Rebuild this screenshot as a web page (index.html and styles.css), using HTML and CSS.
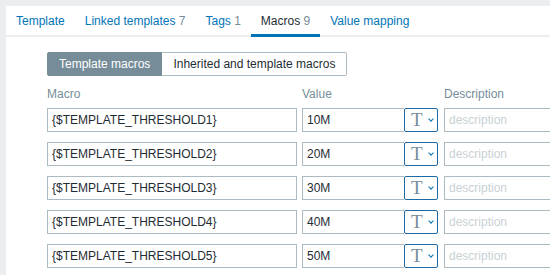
FILE: index.html
```html
<!DOCTYPE html>
<html lang="en">
<head>
    <meta charset="UTF-8">
    <meta name="viewport" content="width=device-width, initial-scale=1.0">
    <title>Template macros</title>
    <link rel="stylesheet" href="styles.css">
</head>
<body>
    <div class="panel">
        <ul class="tabs">
            <li><a href="#">Template</a></li>
            <li><a href="#">Linked templates <span class="count">7</span></a></li>
            <li><a href="#">Tags <span class="count">1</span></a></li>
            <li class="active"><a href="#">Macros <span class="count">9</span></a></li>
            <li><a href="#">Value mapping</a></li>
        </ul>

        <div class="content">
            <div class="segmented">
                <button class="seg on">Template macros</button>
                <button class="seg">Inherited and template macros</button>
            </div>

            <div class="macro-table">
                <div class="head">
                    <span class="col-macro">Macro</span>
                    <span class="col-value">Value</span>
                    <span class="col-desc">Description</span>
                </div>

                <div class="row">
                    <input class="col-macro" type="text" value="{$TEMPLATE_THRESHOLD1}">
                    <div class="col-value value-group">
                        <input type="text" value="10M">
                        <button class="type-btn"><span class="t">T</span><span class="chev"></span></button>
                    </div>
                    <input class="col-desc" type="text" placeholder="description">
                </div>
                <div class="row">
                    <input class="col-macro" type="text" value="{$TEMPLATE_THRESHOLD2}">
                    <div class="col-value value-group">
                        <input type="text" value="20M">
                        <button class="type-btn"><span class="t">T</span><span class="chev"></span></button>
                    </div>
                    <input class="col-desc" type="text" placeholder="description">
                </div>
                <div class="row">
                    <input class="col-macro" type="text" value="{$TEMPLATE_THRESHOLD3}">
                    <div class="col-value value-group">
                        <input type="text" value="30M">
                        <button class="type-btn"><span class="t">T</span><span class="chev"></span></button>
                    </div>
                    <input class="col-desc" type="text" placeholder="description">
                </div>
                <div class="row">
                    <input class="col-macro" type="text" value="{$TEMPLATE_THRESHOLD4}">
                    <div class="col-value value-group">
                        <input type="text" value="40M">
                        <button class="type-btn"><span class="t">T</span><span class="chev"></span></button>
                    </div>
                    <input class="col-desc" type="text" placeholder="description">
                </div>
                <div class="row">
                    <input class="col-macro" type="text" value="{$TEMPLATE_THRESHOLD5}">
                    <div class="col-value value-group">
                        <input type="text" value="50M">
                        <button class="type-btn"><span class="t">T</span><span class="chev"></span></button>
                    </div>
                    <input class="col-desc" type="text" placeholder="description">
                </div>
            </div>
        </div>
    </div>
</body>
</html>
```

FILE: styles.css
```css
html,
body {
    height: 100%;
}
body {
    box-sizing: border-box;
    margin: 0;
    padding: 6px 0 0 6px;
    background-color: #ebeef0;
    font-family: "Liberation Sans", Arial, sans-serif;
    font-size: 12px;
    color: #1f2c33;
    overflow: hidden;
}
.panel {
    background-color: #fff;
    height: 100%;
    overflow: hidden;
}
.tabs {
    display: flex;
    list-style: none;
    margin: 0;
    padding: 0;
    border-bottom: 2px solid #ebeef0;
}
.tabs li {
    margin-bottom: -2px;
}
.tabs a {
    display: block;
    padding: 8px 10px 6px;
    line-height: 14px;
    color: #0275b8;
    text-decoration: none;
    border-bottom: 3px solid transparent;
}
.tabs .count {
    color: #768d99;
}
.tabs .active a {
    color: #1f2c33;
    border-bottom-color: #0275b8;
}
.content {
    padding: 15px 0 0 41px;
}
.segmented {
    display: flex;
}
.seg {
    height: 24px;
    padding: 0 11px;
    font-family: inherit;
    font-size: 12px;
    color: #1f2c33;
    background-color: #fff;
    border: 1px solid #acbbc2;
    border-left: none;
    border-radius: 0 2px 2px 0;
}
.seg.on {
    color: #fff;
    background-color: #768d99;
    border: 1px solid #768d99;
    border-radius: 2px 0 0 2px;
}
.macro-table {
    margin-top: 11px;
    overflow: hidden;
}
.head,
.row {
    display: flex;
    align-items: center;
}
.head {
    line-height: 14px;
    color: #768d99;
    margin-bottom: 7px;
}
.row {
    margin-bottom: 10px;
}
.col-macro {
    flex-shrink: 0;
    width: 250px;
    margin-right: 5px;
}
.col-value {
    flex-shrink: 0;
    width: 136px;
    margin-right: 6px;
}
.col-desc {
    flex-shrink: 0;
    width: 250px;
}
input {
    box-sizing: border-box;
    height: 24px;
    padding: 0 4px;
    font-family: inherit;
    font-size: 12px;
    color: #1f2c33;
    border: 1px solid #acbbc2;
    border-radius: 0;
    background-color: #fff;
    outline: none;
}
input::placeholder {
    color: #c9d1d5;
}
.value-group {
    display: flex;
}
.value-group input {
    width: 102px;
    border-right: none;
}
.type-btn {
    box-sizing: border-box;
    width: 34px;
    height: 24px;
    padding: 0 0 0 6px;
    display: flex;
    align-items: center;
    background-color: #fff;
    border: 1px solid #1f6aa5;
    border-radius: 2px;
}
.type-btn .t {
    font-family: "Liberation Serif", "Times New Roman", serif;
    font-size: 19px;
    line-height: 20px;
    color: #768d99;
}
.type-btn .chev {
    width: 3px;
    height: 3px;
    margin: -3px 0 0 6px;
    border-right: 1.5px solid #0275b8;
    border-bottom: 1.5px solid #0275b8;
    transform: rotate(45deg);
}
```
